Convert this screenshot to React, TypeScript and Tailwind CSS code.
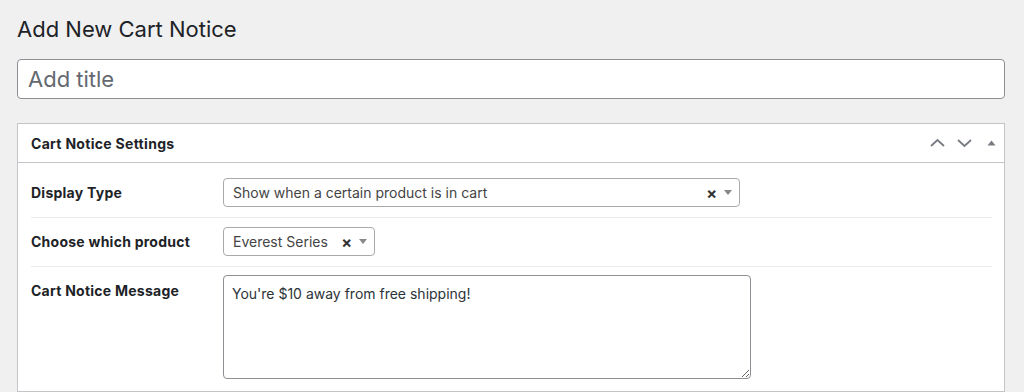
import React from "react";

function SelectBox({ value, width }: { value: string; width: string }) {
  return (
    <div
      className={`flex h-[29px] items-center rounded-[4px] border border-[#aaaaaa] bg-white pl-[9px] pr-[7px] text-[14px] text-[#444444] ${width}`}
    >
      <span className="flex-1 truncate">{value}</span>
      <span className="mr-[7px] text-[16px] font-bold leading-none text-[#333333]">×</span>
      <span className="h-0 w-0 border-x-[4px] border-t-[5px] border-x-transparent border-t-[#888888]" />
    </div>
  );
}

export default function App() {
  return (
    <div
      className="min-h-screen bg-[#f0f0f1] pl-[17px] text-[#1d2327]"
      style={{ fontFamily: 'Inter, "Liberation Sans", sans-serif' }}
    >
      <h1 className="pt-[14px] text-[22px] font-normal leading-[30px]">Add New Cart Notice</h1>

      {/* title field */}
      <div className="mt-[15px] flex h-[40px] w-[988px] items-center rounded-[4px] border border-[#8c8f94] bg-white px-[10px]">
        <input
          className="w-full bg-transparent text-[22px] text-[#1d2327] outline-none placeholder:text-[#646970]"
          placeholder="Add title"
        />
      </div>

      {/* settings box */}
      <div className="mt-[24px] w-[988px] border border-[#c3c4c7] bg-white">
        <div className="flex h-[39px] items-center border-b border-[#c3c4c7] pl-[13px]">
          <h2 className="flex-1 text-[14px] font-bold tracking-[0.3px]">Cart Notice Settings</h2>
          <div className="flex items-center text-[#787c82]">
            <svg width="27" height="20" viewBox="0 0 27 20" fill="none">
              <path d="M7 13l6.5-6 6.5 6" stroke="currentColor" strokeWidth="1.8" />
            </svg>
            <svg width="27" height="20" viewBox="0 0 27 20" fill="none">
              <path d="M7 7l6.5 6 6.5-6" stroke="currentColor" strokeWidth="1.8" />
            </svg>
            <svg width="27" height="20" viewBox="0 0 27 20" className="mr-[-1px]">
              <path d="M9.5 12.5l4-5 4 5z" fill="currentColor" />
            </svg>
          </div>
        </div>

        <div className="pl-[13px] pr-[12px]">
          <div className="flex items-center border-b border-[#ebebeb] pb-[10px] pt-[15px]">
            <div className="w-[192px] text-[14px] font-bold tracking-[0.25px]">Display Type</div>
            <SelectBox value="Show when a certain product is in cart" width="w-[517px]" />
          </div>

          <div className="flex items-center border-b border-[#ebebeb] pb-[10px] pt-[9px]">
            <div className="w-[192px] text-[14px] font-bold tracking-[0.25px]">Choose which product</div>
            <SelectBox value="Everest Series" width="w-[152px]" />
          </div>

          <div className="flex items-start pb-[12px] pt-[8px]">
            <div className="w-[192px] pt-[6px] text-[14px] font-bold leading-[20px] tracking-[0.25px]">
              Cart Notice Message
            </div>
            <textarea
              readOnly
              defaultValue="You're $10 away from free shipping!"
              className="h-[104px] w-[528px] rounded-[4px] border border-[#8c8f94] px-[8px] py-[8px] text-[14px] leading-[20px] text-[#2c3338] outline-none"
            />
          </div>
        </div>
      </div>
    </div>
  );
}
